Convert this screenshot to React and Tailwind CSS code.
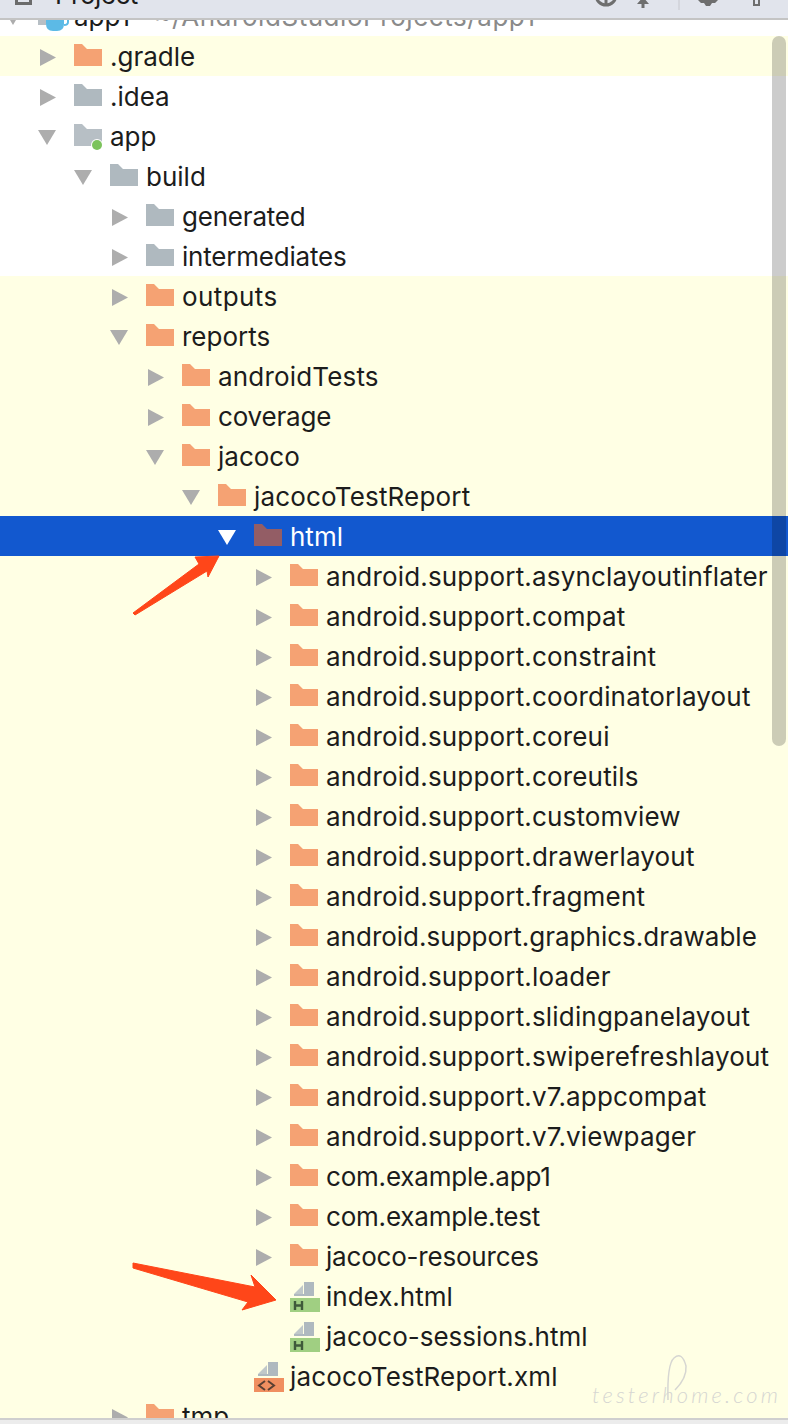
import React from 'react';

const indent = {
  0: 'pl-[40px]',
  1: 'pl-[76px]',
  2: 'pl-[112px]',
  3: 'pl-[148px]',
  4: 'pl-[184px]',
  5: 'pl-[220px]',
  6: 'pl-[256px]',
};

const tracking = {
  wide: 'tracking-[0.4px]',
  android: 'tracking-[0.17px]',
  tight: 'tracking-[-0.2px]',
  normal: 'tracking-normal',
};

const rows = [
  { name: '.gradle', depth: 0, icon: 'orange', arrow: 'right', bg: 'yellow' },
  { name: '.idea', depth: 0, icon: 'grey', arrow: 'right', bg: 'white' },
  { name: 'app', depth: 0, icon: 'module', arrow: 'down', bg: 'white' },
  { name: 'build', depth: 1, icon: 'grey', arrow: 'down', bg: 'white' },
  { name: 'generated', depth: 2, icon: 'grey', arrow: 'right', bg: 'white', track: 'tight' },
  { name: 'intermediates', depth: 2, icon: 'grey', arrow: 'right', bg: 'white', track: 'tight' },
  { name: 'outputs', depth: 2, icon: 'orange', arrow: 'right', track: 'wide' },
  { name: 'reports', depth: 2, icon: 'orange', arrow: 'down' },
  { name: 'androidTests', depth: 3, icon: 'orange', arrow: 'right', track: 'android' },
  { name: 'coverage', depth: 3, icon: 'orange', arrow: 'right', track: 'tight' },
  { name: 'jacoco', depth: 3, icon: 'orange', arrow: 'down' },
  { name: 'jacocoTestReport', depth: 4, icon: 'orange', arrow: 'down', track: 'android' },
  { name: 'html', depth: 5, icon: 'selected', arrow: 'down', selected: true },
  { name: 'android.support.asynclayoutinflater', depth: 6, icon: 'orange', arrow: 'right', track: 'android' },
  { name: 'android.support.compat', depth: 6, icon: 'orange', arrow: 'right', track: 'android' },
  { name: 'android.support.constraint', depth: 6, icon: 'orange', arrow: 'right', track: 'android' },
  { name: 'android.support.coordinatorlayout', depth: 6, icon: 'orange', arrow: 'right', track: 'android' },
  { name: 'android.support.coreui', depth: 6, icon: 'orange', arrow: 'right', track: 'android' },
  { name: 'android.support.coreutils', depth: 6, icon: 'orange', arrow: 'right', track: 'android' },
  { name: 'android.support.customview', depth: 6, icon: 'orange', arrow: 'right', track: 'android' },
  { name: 'android.support.drawerlayout', depth: 6, icon: 'orange', arrow: 'right', track: 'android' },
  { name: 'android.support.fragment', depth: 6, icon: 'orange', arrow: 'right', track: 'android' },
  { name: 'android.support.graphics.drawable', depth: 6, icon: 'orange', arrow: 'right' },
  { name: 'android.support.loader', depth: 6, icon: 'orange', arrow: 'right', track: 'android' },
  { name: 'android.support.slidingpanelayout', depth: 6, icon: 'orange', arrow: 'right', track: 'android' },
  { name: 'android.support.swiperefreshlayout', depth: 6, icon: 'orange', arrow: 'right', track: 'android' },
  { name: 'android.support.v7.appcompat', depth: 6, icon: 'orange', arrow: 'right', track: 'android' },
  { name: 'android.support.v7.viewpager', depth: 6, icon: 'orange', arrow: 'right', track: 'android' },
  { name: 'com.example.app1', depth: 6, icon: 'orange', arrow: 'right', track: 'tight' },
  { name: 'com.example.test', depth: 6, icon: 'orange', arrow: 'right', track: 'tight' },
  { name: 'jacoco-resources', depth: 6, icon: 'orange', arrow: 'right', track: 'tight' },
  { name: 'index.html', depth: 6, icon: 'html' },
  { name: 'jacoco-sessions.html', depth: 6, icon: 'html' },
  { name: 'jacocoTestReport.xml', depth: 5, icon: 'xml', track: 'android' },
  { name: 'tmp', depth: 2, icon: 'orange', arrow: 'right' },
];

const Arrow = ({ dir, selected }) => {
  if (dir === 'right') {
    return (
      <svg className="w-4 h-[17px] mt-[3px]" viewBox="0 0 16 17">
        <path d="M0 0 L16 8.5 L0 17 Z" fill="#adadad" />
      </svg>
    );
  }
  if (dir === 'down') {
    return (
      <svg className="w-[18px] h-[15px] -ml-[2px] mt-[3px]" viewBox="0 0 18 15">
        <path d="M0 0 L18 0 L9 15 Z" fill={selected ? '#ffffff' : '#adadad'} />
      </svg>
    );
  }
  return null;
};

const Folder = ({ color }) => (
  <svg className="block w-7 h-[22px] shrink-0" viewBox="0 0 28 22">
    <path d="M0 0 H8 L13 5 H28 V22 H0 Z" fill={color} />
  </svg>
);

const FileIcon = ({ label }) => (
  <svg className="w-[30px] h-[30px] shrink-0 -mr-[2px] mt-[2px]" viewBox="0 0 30 30">
    <path d="M14 0 H24 V14 H4 V12 H14 Z" fill="#afb9bf" />
    <path d="M4 12 L13 3 V12 Z" fill="#c0c8c9" />
    <rect x="0" y="16" width="30" height="14" fill={label === 'html' ? '#a0cf82' : '#f08f60'} />
    {label === 'html' ? (
      <path d="M5 19 V28 M12 19 V28 M5 23.5 H12" stroke="#3f5a3a" strokeWidth="2.4" fill="none" />
    ) : (
      <path d="M11 19 L5 23.5 L11 28 M14 19 L20 23.5 L14 28" stroke="#5a4033" strokeWidth="2" fill="none" />
    )}
  </svg>
);

const RowIcon = ({ icon }) => {
  if (icon === 'orange') return <span className="mb-[2px]"><Folder color="#f5a273" /></span>;
  if (icon === 'grey') return <span className="mb-[2px]"><Folder color="#afb9bf" /></span>;
  if (icon === 'selected') return <span className="mb-[2px]"><Folder color="#935d65" /></span>;
  if (icon === 'html') return <FileIcon label="html" />;
  if (icon === 'xml') return <FileIcon label="xml" />;
  return (
    <span className="relative shrink-0 w-7 h-[22px] mb-[2px]">
      <Folder color="#b7bfc5" />
      <span className="absolute right-0 -bottom-1 w-[10px] h-[10px] rounded-full bg-[#7cc35c] ring-1 ring-white" />
    </span>
  );
};

const Row = ({ row }) => {
  let bg = 'bg-[#ffffe4]';
  if (row.bg === 'white') bg = 'bg-white';
  if (row.selected) bg = 'bg-[#1258cf]';
  return (
    <div className={`flex items-center h-10 shrink-0 ${bg} ${indent[row.depth]}`}>
      <span className="w-[34px] shrink-0 flex items-center">
        <Arrow dir={row.arrow} selected={row.selected} />
      </span>
      <RowIcon icon={row.icon} />
      <span className={`ml-2 mt-[2px] whitespace-nowrap text-[26px] leading-10 ${tracking[row.track || 'normal']} ${row.selected ? 'text-white' : 'text-[#1c1c1c]'}`}>
        {row.name}
      </span>
    </div>
  );
};

const HeaderIcons = () => (
  <svg className="w-[180px] h-[18px] shrink-0" viewBox="0 0 180 18">
    <circle cx="16" cy="-5" r="10" stroke="#6e6e6e" strokeWidth="3" fill="none" />
    <path d="M16 -5 V6" stroke="#6e6e6e" strokeWidth="3" />
    <path d="M53 -3 L59 4 H47 Z M51.500 2 H54.500 V8 H51.500 Z" fill="#6e6e6e" />
    <path d="M89 0 V10" stroke="#cfd2d8" strokeWidth="1.500" />
    <path d="M108 0 H128 L125 3 L122 3 L120 6 H116 L114 3 L111 3 Z" fill="#6e6e6e" />
    <path d="M164 0 V5 H169 V0" stroke="#6e6e6e" strokeWidth="2" fill="none" />
  </svg>
);

const Header = () => (
  <div className="relative z-10 shrink-0 h-5 bg-[#e1e4ec] border-b-2 border-[#c4c4c4] overflow-hidden">
    <div className="flex items-start justify-between h-[18px] pr-[18px] overflow-hidden">
      <div className="flex items-center h-10 shrink-0 -mt-[25px] pl-[15px] gap-[23px]">
        <span className="w-[17px] h-[17px] mt-[3px] border-[3px] border-[#6b6b6b]" />
        <span className="text-[26px] leading-10 tracking-[-0.5px] text-[#1c1c1c]">Project</span>
      </div>
      <HeaderIcons />
    </div>
  </div>
);

export default function App() {
  return (
    <div className="relative h-[1424px] w-[788px] overflow-hidden bg-[#ffffe4] font-['Inter',sans-serif]">
      <Header />
      <div className="relative -mt-6">
        <div className="flex items-center h-10 bg-white pl-[4px]">
          <span className="w-[34px] flex items-center">
            <svg className="w-[18px] h-[15px] mt-[3px]" viewBox="0 0 18 15">
              <path d="M0 0 L18 0 L9 15 Z" fill="#adadad" />
            </svg>
          </span>
          <svg className="w-[32px] h-[30px] -mr-[4px] mt-[4px]" viewBox="0 0 32 30">
            <path d="M0 0 H8 L13 5 H28 V14 H8 V22 H0 Z" fill="#b7bfc5" />
            <path d="M8 13 H26 V21 Q26 28 19 28 H15 Q8 28 8 21 Z" fill="#5cbae6" />
            <path d="M26 15 H30 V19 Q30 22 26 22" stroke="#5cbae6" strokeWidth="2" fill="none" />
          </svg>
          <span className="ml-2 mt-[2px] text-[26px] leading-10 text-[#1c1c1c] whitespace-nowrap">app1</span>
          <span className="ml-6 mt-[2px] text-[26px] leading-10 tracking-[0.55px] text-[#8a8a8a] whitespace-nowrap">~/AndroidStudioProjects/app1</span>
        </div>
        {rows.map((row) => (
          <Row key={row.name} row={row} />
        ))}
      </div>

      {/* scrollbar */}
      <div className="absolute left-[772px] top-[36px] w-[14px] h-[710px] rounded-full bg-black/20" />

      {/* annotation arrows */}
      <svg className="absolute left-[130px] top-[550px] w-[100px] h-[70px]" viewBox="0 0 100 70">
        <path d="M3 63 L69 14 L65 7 L89 6 L78 27 L77 21 L5 65 Z" fill="#ff4619" stroke="#ff4619" strokeLinejoin="round" />
      </svg>
      <svg className="absolute left-[130px] top-[1258px] w-[150px] h-[60px]" viewBox="0 0 150 60">
        <path d="M3 5 L125 29 L121 17 L146 42 L112 52 L118 44 L3 10 Z" fill="#ff4619" stroke="#ff4619" strokeLinejoin="round" />
      </svg>

      {/* watermark */}
      <span className="absolute left-[592px] top-[1381px] text-[22px] leading-7 tracking-[3.2px] font-light text-[#d6d6d2] italic font-['Lato',sans-serif]">
        testerhome.com
      </span>
      <svg className="absolute left-[660px] top-[1352px] w-[32px] h-[50px]" viewBox="0 0 32 50">
        <path d="M8 48 Q7 12 14 6 Q22 -1 26 14 Q27 26 15 38" stroke="#d6d6d2" strokeWidth="1.500" fill="none" />
      </svg>

      {/* status bar edge */}
      <div className="absolute left-0 right-0 bottom-0 h-[6px] bg-[#ececec] border-t-2 border-[#cfcfcf]" />
    </div>
  );
}
